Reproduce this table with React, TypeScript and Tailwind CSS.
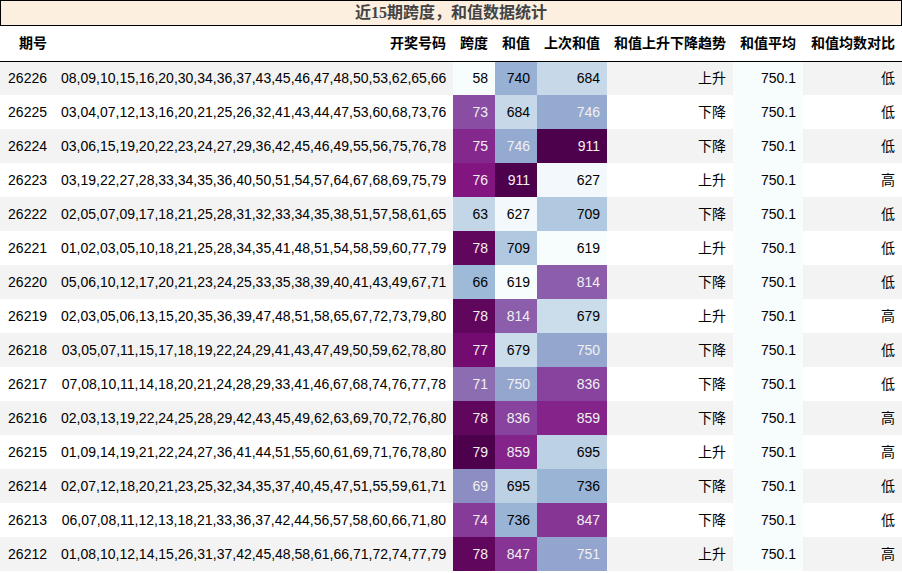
const rows: [string, string, number, number, number, string, string][] = [
  ["26226", "08,09,10,15,16,20,30,34,36,37,43,45,46,47,48,50,53,62,65,66", 58, 740, 684, "上升", "低"],
  ["26225", "03,04,07,12,13,16,20,21,25,26,32,41,43,44,47,53,60,68,73,76", 73, 684, 746, "下降", "低"],
  ["26224", "03,06,15,19,20,22,23,24,27,29,36,42,45,46,49,55,56,75,76,78", 75, 746, 911, "下降", "低"],
  ["26223", "03,19,22,27,28,33,34,35,36,40,50,51,54,57,64,67,68,69,75,79", 76, 911, 627, "上升", "高"],
  ["26222", "02,05,07,09,17,18,21,25,28,31,32,33,34,35,38,51,57,58,61,65", 63, 627, 709, "下降", "低"],
  ["26221", "01,02,03,05,10,18,21,25,28,34,35,41,48,51,54,58,59,60,77,79", 78, 709, 619, "上升", "低"],
  ["26220", "05,06,10,12,17,20,21,23,24,25,33,35,38,39,40,41,43,49,67,71", 66, 619, 814, "下降", "低"],
  ["26219", "02,03,05,06,13,15,20,35,36,39,47,48,51,58,65,67,72,73,79,80", 78, 814, 679, "上升", "高"],
  ["26218", "03,05,07,11,15,17,18,19,22,24,29,41,43,47,49,50,59,62,78,80", 77, 679, 750, "下降", "低"],
  ["26217", "07,08,10,11,14,18,20,21,24,28,29,33,41,46,67,68,74,76,77,78", 71, 750, 836, "下降", "低"],
  ["26216", "02,03,13,19,22,24,25,28,29,42,43,45,49,62,63,69,70,72,76,80", 78, 836, 859, "下降", "高"],
  ["26215", "01,09,14,19,21,22,24,27,36,41,44,51,55,60,61,69,71,76,78,80", 79, 859, 695, "上升", "高"],
  ["26214", "02,07,12,18,20,21,23,25,32,34,35,37,40,45,47,51,55,59,61,71", 69, 695, 736, "下降", "低"],
  ["26213", "06,07,08,11,12,13,18,21,33,36,37,42,44,56,57,58,60,66,71,80", 74, 736, 847, "下降", "低"],
  ["26212", "01,08,10,12,14,15,26,31,37,42,45,48,58,61,66,71,72,74,77,79", 78, 847, 751, "上升", "高"],
];

// BuPu stops
const stops = [
  [247, 252, 253], [224, 236, 244], [191, 211, 230], [158, 188, 218], [140, 150, 198],
  [140, 107, 177], [136, 65, 157], [129, 15, 124], [77, 0, 75],
];

function bupu(x: number) {
  const i = Math.min(255, Math.max(0, Math.floor(x * 256))) / 255;
  const p = i * 8;
  const k = Math.min(7, Math.floor(p));
  const t = p - k;
  const c = stops[k].map((v, j) => Math.round(v + (stops[k + 1][j] - v) * t));
  const lin = c.map((v) => {
    const s = v / 255;
    return s <= 0.04045 ? s / 12.92 : Math.pow((s + 0.055) / 1.055, 2.4);
  });
  const lum = 0.2126 * lin[0] + 0.7152 * lin[1] + 0.0722 * lin[2];
  return { backgroundColor: `rgb(${c[0]},${c[1]},${c[2]})`, color: lum < 0.408 ? "#f1f1f1" : "#000000" };
}

const spans = rows.map((r) => r[2]);
const sums = rows.map((r) => r[3]);
const prev = rows.map((r) => r[4]);
const norm = (v: number, arr: number[]) => {
  const lo = Math.min(...arr);
  const hi = Math.max(...arr);
  return hi === lo ? 0 : (v - lo) / (hi - lo);
};

const th = "h-[35px] px-[7px] text-right font-bold text-black";
const td = "h-[34px] px-[7px] text-right";

export default function App() {
  return (
    <div className="w-[902px] h-[573px] overflow-hidden bg-white text-[14px] text-black font-['Liberation_Sans','Noto_Sans_CJK_SC',sans-serif]">
      <div className="h-[26px] border border-black bg-[#fdefdf] flex items-center justify-center text-[16px] font-bold text-[#444] font-['Liberation_Serif','Noto_Sans_CJK_SC',serif]">
        近15期跨度，和值数据统计
      </div>
      <table className="w-[902px] table-fixed border-collapse">
        <colgroup>
          <col className="w-[54px]" />
          <col className="w-[399px]" />
          <col className="w-[42px]" />
          <col className="w-[42px]" />
          <col className="w-[70px]" />
          <col className="w-[126px]" />
          <col className="w-[70px]" />
          <col className="w-[99px]" />
        </colgroup>
        <thead>
          <tr className="border-b border-black">
            <th className={th}>期号</th>
            <th className={th}>开奖号码</th>
            <th className={th}>跨度</th>
            <th className={th}>和值</th>
            <th className={th}>上次和值</th>
            <th className={th}>和值上升下降趋势</th>
            <th className={th}>和值平均</th>
            <th className={th}>和值均数对比</th>
          </tr>
        </thead>
        <tbody>
          {rows.map((r, i) => (
            <tr key={r[0]} className={i % 2 === 0 ? "bg-[#f3f3f3]" : "bg-white"}>
              <td className={td}>{r[0]}</td>
              <td className={`${td} whitespace-nowrap`}>{r[1]}</td>
              <td className={td} style={bupu(norm(r[2], spans))}>{r[2]}</td>
              <td className={td} style={bupu(norm(r[3], sums))}>{r[3]}</td>
              <td className={td} style={bupu(norm(r[4], prev))}>{r[4]}</td>
              <td className={td}>{r[5]}</td>
              <td className={`${td} bg-[#f7fcfd]`}>750.1</td>
              <td className={td}>{r[6]}</td>
            </tr>
          ))}
        </tbody>
      </table>
    </div>
  );
}
